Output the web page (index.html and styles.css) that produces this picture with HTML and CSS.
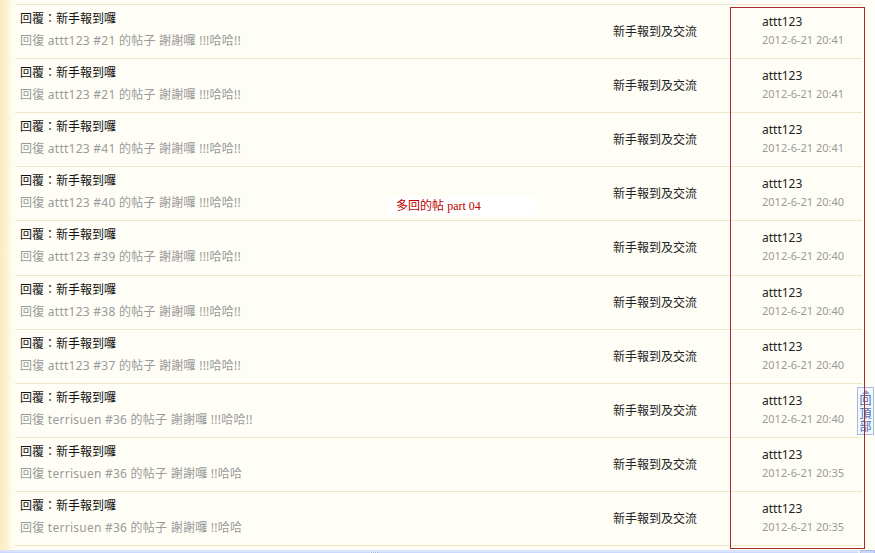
FILE: index.html
```html
<!DOCTYPE html>
<html lang="zh-Hant">
<head>
<meta charset="utf-8">
<title>多回的帖 part 04</title>
<link rel="stylesheet" href="styles.css">
</head>
<body>
<div class="page">
  <div class="list">
    <div class="row">
      <div class="subj"><div class="title">回覆：新手報到囉</div><div class="quote">回復 attt123 #21 的帖子 謝謝囉 !!!哈哈!!</div></div>
      <div class="forum">新手報到及交流</div>
      <div class="meta"><div class="user">attt123</div><div class="date">2012-6-21 20:41</div></div>
    </div>
    <div class="row">
      <div class="subj"><div class="title">回覆：新手報到囉</div><div class="quote">回復 attt123 #21 的帖子 謝謝囉 !!!哈哈!!</div></div>
      <div class="forum">新手報到及交流</div>
      <div class="meta"><div class="user">attt123</div><div class="date">2012-6-21 20:41</div></div>
    </div>
    <div class="row">
      <div class="subj"><div class="title">回覆：新手報到囉</div><div class="quote">回復 attt123 #41 的帖子 謝謝囉 !!!哈哈!!</div></div>
      <div class="forum">新手報到及交流</div>
      <div class="meta"><div class="user">attt123</div><div class="date">2012-6-21 20:41</div></div>
    </div>
    <div class="row">
      <div class="subj"><div class="title">回覆：新手報到囉</div><div class="quote">回復 attt123 #40 的帖子 謝謝囉 !!!哈哈!!</div></div>
      <div class="forum">新手報到及交流</div>
      <div class="meta"><div class="user">attt123</div><div class="date">2012-6-21 20:40</div></div>
    </div>
    <div class="row">
      <div class="subj"><div class="title">回覆：新手報到囉</div><div class="quote">回復 attt123 #39 的帖子 謝謝囉 !!!哈哈!!</div></div>
      <div class="forum">新手報到及交流</div>
      <div class="meta"><div class="user">attt123</div><div class="date">2012-6-21 20:40</div></div>
    </div>
    <div class="row">
      <div class="subj"><div class="title">回覆：新手報到囉</div><div class="quote">回復 attt123 #38 的帖子 謝謝囉 !!!哈哈!!</div></div>
      <div class="forum">新手報到及交流</div>
      <div class="meta"><div class="user">attt123</div><div class="date">2012-6-21 20:40</div></div>
    </div>
    <div class="row">
      <div class="subj"><div class="title">回覆：新手報到囉</div><div class="quote">回復 attt123 #37 的帖子 謝謝囉 !!!哈哈!!</div></div>
      <div class="forum">新手報到及交流</div>
      <div class="meta"><div class="user">attt123</div><div class="date">2012-6-21 20:40</div></div>
    </div>
    <div class="row">
      <div class="subj"><div class="title">回覆：新手報到囉</div><div class="quote">回復 terrisuen #36 的帖子 謝謝囉 !!!哈哈!!</div></div>
      <div class="forum">新手報到及交流</div>
      <div class="meta"><div class="user">attt123</div><div class="date">2012-6-21 20:40</div></div>
    </div>
    <div class="row">
      <div class="subj"><div class="title">回覆：新手報到囉</div><div class="quote">回復 terrisuen #36 的帖子 謝謝囉 !!哈哈</div></div>
      <div class="forum">新手報到及交流</div>
      <div class="meta"><div class="user">attt123</div><div class="date">2012-6-21 20:35</div></div>
    </div>
    <div class="row">
      <div class="subj"><div class="title">回覆：新手報到囉</div><div class="quote">回復 terrisuen #36 的帖子 謝謝囉 !!哈哈</div></div>
      <div class="forum">新手報到及交流</div>
      <div class="meta"><div class="user">attt123</div><div class="date">2012-6-21 20:35</div></div>
    </div>
  </div>

  <div class="annot">多回的帖 <span class="annot-latin">part 04</span></div>

  <a class="totop" href="#"><span class="tri"></span><span class="totop-text">回頂部</span></a>

  <div class="redbox"></div>

  <div class="hscroll">
    <div class="thumb"><span class="grip"></span></div>
    <div class="arrow"></div>
  </div>
</div>
</body>
</html>
```

FILE: styles.css
```css
html, body {
  margin: 0;
  padding: 0;
}

body {
  width: 875px;
  height: 553px;
  overflow: hidden;
  background: linear-gradient(to right, #fbecc0 0, #fcf1cf 6px, #fffbed 12px, #fffef6 16px, #fffef6 100%);
  font-family: "Noto Sans", "Noto Sans CJK TC", sans-serif;
  font-size: 12px;
  color: #000;
}

.page {
  position: relative;
  width: 875px;
  height: 553px;
}

.list {
  margin: 4px 0 0 15px;
  width: 847px;
  border-top: 1px solid #f0e7c8;
}

.row {
  display: grid;
  grid-template-columns: 593px 149px 1fr;
  height: 53.12px;
  padding-left: 5px;
  border-bottom: 1px solid #f0e7c8;
}

.subj {
  padding-top: 3px;
  line-height: 22px;
}

.title {
  color: #111;
  white-space: nowrap;
}

.quote {
  color: #9a9a9a;
  white-space: nowrap;
  letter-spacing: 0.25px;
}

.forum {
  display: flex;
  align-items: center;
  padding-bottom: 1px;
  color: #222;
}

.meta {
  padding-top: 8px;
  line-height: 18px;
}

.user {
  color: #222;
}

.date {
  color: #9a9a9a;
  font-size: 11px;
}

.annot {
  position: absolute;
  left: 388px;
  top: 193px;
  width: 147px;
  height: 18px;
  padding-left: 8px;
  box-sizing: border-box;
  background: #fff;
  color: #c00000;
  font-size: 12px;
  line-height: 18px;
  white-space: nowrap;
}

.annot-latin {
  font-family: "Liberation Serif", serif;
  font-size: 12px;
}

.totop {
  position: absolute;
  left: 857px;
  top: 383px;
  width: 15px;
  height: 46px;
  border: 1px solid #a8bde0;
  background: #f3f6fb;
  text-decoration: none;
  display: flex;
  flex-direction: column;
  align-items: center;
  overflow: hidden;
}

.tri {
  flex: none;
  width: 0;
  height: 0;
  margin-top: 2px;
  border-left: 4px solid transparent;
  border-right: 4px solid transparent;
  border-bottom: 4px solid #8aa2cf;
}

.totop-text {
  width: 12px;
  color: #4f6fb3;
  font-size: 12px;
  line-height: 13px;
  word-break: break-all;
  text-align: center;
}

.redbox {
  position: absolute;
  left: 730px;
  top: 3px;
  width: 133px;
  height: 540px;
  border: 1px solid #a82a2a;
  pointer-events: none;
}

.hscroll {
  position: absolute;
  left: 0;
  bottom: 0;
  width: 875px;
  height: 7px;
  display: flex;
  background: #f2f1ea;
}

.thumb {
  flex: 1;
  margin-right: 2px;
  background: linear-gradient(to bottom, #e4ebfd 0, #c2d3fc 2px, #b9cbf9 100%);
  border-top: 1px solid #d8e2fb;
  display: flex;
  justify-content: center;
}

.grip {
  width: 8px;
  margin-left: -110px;
  margin-top: 1px;
  background: repeating-linear-gradient(to right, #eef3ff 0, #eef3ff 1px, #9eb3e8 1px, #9eb3e8 2px);
}

.arrow {
  width: 13px;
  border: 1px solid #a9bdea;
  border-bottom: none;
  background: #c7d7fb;
}
```
